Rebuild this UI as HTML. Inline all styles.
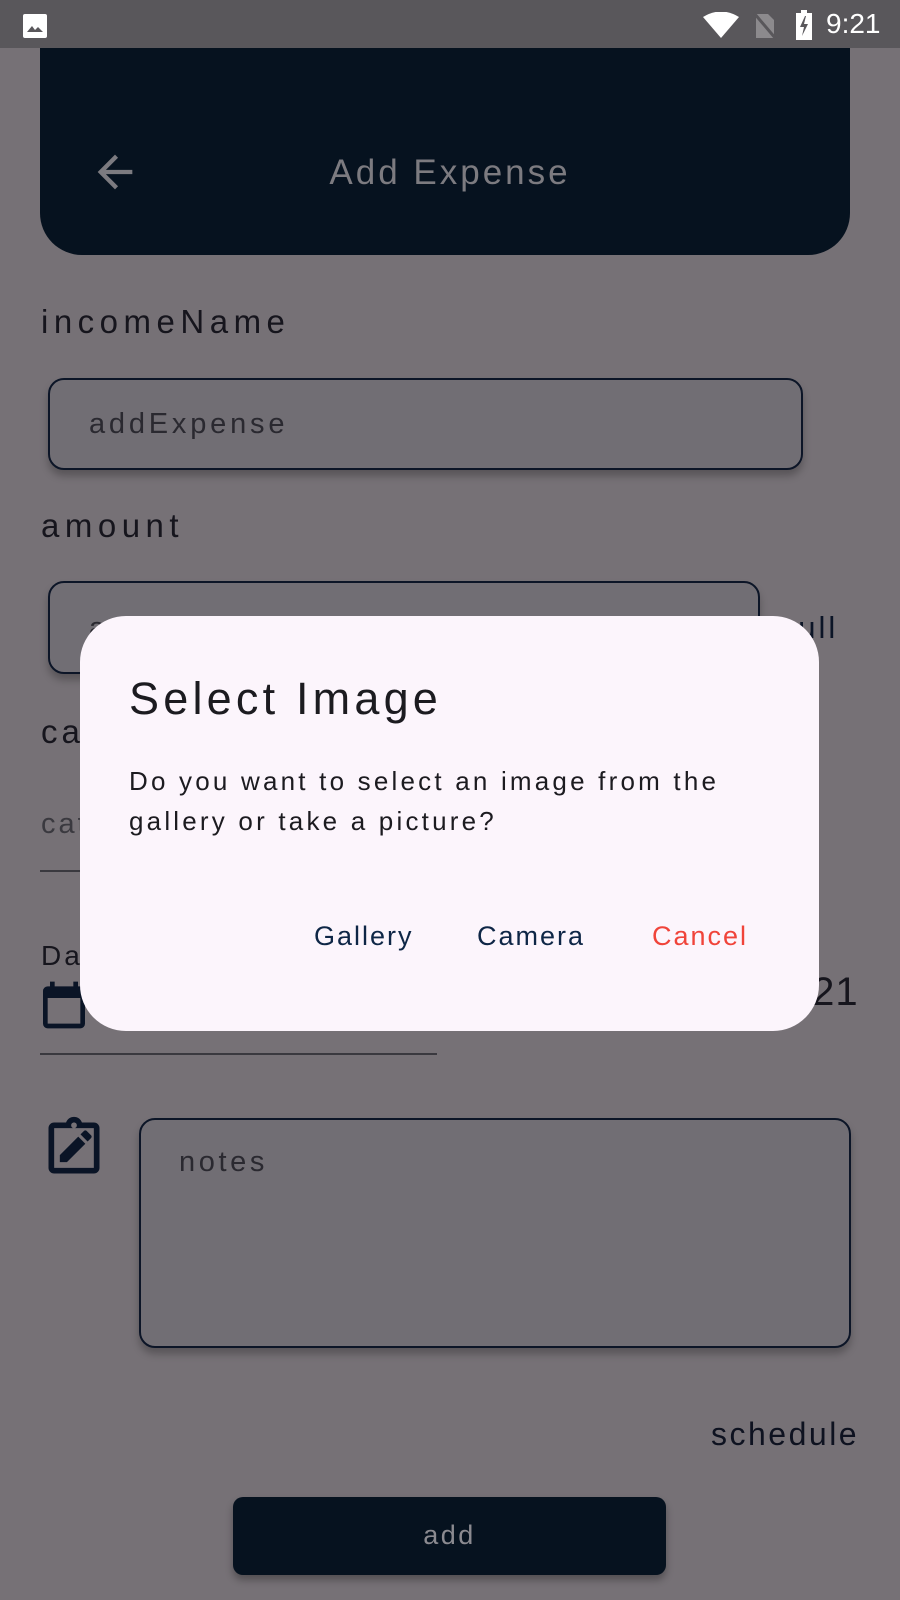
<!DOCTYPE html>
<html><head><meta charset="utf-8"><style>
*{margin:0;padding:0;box-sizing:border-box}
body{width:900px;height:1600px;background:#767176;position:relative;overflow:hidden;font-family:"Liberation Sans",sans-serif;color:#16151d}
.a{position:absolute;white-space:nowrap}
.box{position:absolute;border:2px solid #0c1527;border-radius:16px;background:#716e74;box-shadow:0 6px 8px rgba(0,0,0,.25)}
</style></head><body>
<div class="a" style="left:0;top:0;width:900px;height:48px;background:#59575b"></div>
<svg class="a" style="left:22px;top:13px" width="26" height="26" viewBox="0 0 26 26"><rect x="1" y="1" width="24" height="24" rx="2" fill="#fff"/><path d="M5 19l5-6 3 4 3-3 5 5z" fill="#59575b"/></svg>
<svg class="a" style="left:703px;top:12px" width="36" height="26" viewBox="0 0 36 26"><path d="M0 5Q18-6 36 5L18 26Z" fill="#fff"/></svg>
<svg class="a" style="left:752px;top:12px" width="26" height="28" viewBox="0 0 26 28"><path d="M4 2h12l6 6v18H4z" fill="#8c8a8d"/><path d="M2 1l22 26" stroke="#59575b" stroke-width="3"/></svg>
<svg class="a" style="left:795px;top:10px" width="18" height="30" viewBox="0 0 18 30"><rect x="6" y="0" width="6" height="3" fill="#fff"/><rect x="1" y="3" width="16" height="27" fill="#fff"/><path d="M10 6l-5 11h4l-2 9 6-12h-4l2-8z" fill="#59575b"/></svg>
<div class="a" style="left:826px;top:8px;font-size:28px;color:#fff">9:21</div>

<div class="a" style="left:40px;top:48px;width:810px;height:207px;background:#06121f;border-radius:0 0 42px 42px"></div>
<svg class="a" style="left:89px;top:146px" width="52" height="52" viewBox="0 0 24 24"><path d="M20 11H7.8l5.6-5.6L12 4l-8 8 8 8 1.4-1.4L7.8 13H20z" fill="#7c7b80"/></svg>
<div class="a" style="left:0;width:900px;text-align:center;top:153px;font-size:35px;letter-spacing:3px;color:#7c7b80">Add Expense</div>

<div class="a" style="left:41px;top:303px;font-size:33px;letter-spacing:5.5px">incomeName</div>
<div class="box" style="left:48px;top:378px;width:755px;height:92px"></div>
<div class="a" style="left:89px;top:408px;font-size:29px;letter-spacing:3.8px;color:#2a2930">addExpense</div>

<div class="a" style="left:41px;top:507px;font-size:33px;letter-spacing:5.5px">amount</div>
<div class="box" style="left:48px;top:581px;width:712px;height:93px"></div>
<div class="a" style="left:89px;top:612px;font-size:29px;color:#2a2930">a</div>
<div class="a" style="left:778px;top:610px;font-size:31px;letter-spacing:3px;color:#0c1527">null</div>

<div class="a" style="left:41px;top:713px;font-size:33px;letter-spacing:4px">ca</div>
<div class="a" style="left:41px;top:808px;font-size:29px;letter-spacing:3px;color:#3a393f">cat</div>
<div class="a" style="left:40px;top:870px;width:60px;height:2px;background:#3a393f"></div>
<div class="a" style="left:41px;top:940px;font-size:28px;letter-spacing:3px">Da</div>
<svg class="a" style="left:36px;top:977px" width="56" height="56" viewBox="0 0 24 24"><path d="M19 4h-1V2h-2v2H8V2H6v2H5a2 2 0 0 0-2 2v14a2 2 0 0 0 2 2h14a2 2 0 0 0 2-2V6a2 2 0 0 0-2-2zm0 16H5V9h14z" fill="#0a1426"/></svg>
<div class="a" style="left:800px;top:970px;font-size:40px;letter-spacing:1px;color:#16151d">.21</div>
<div class="a" style="left:40px;top:1053px;width:397px;height:2px;background:#3a393f"></div>

<svg class="a" style="left:40px;top:1114px" width="68" height="68" viewBox="0 0 24 24"><path d="M19 3h-4.2C14.4 1.8 13.3 1 12 1s-2.4.8-2.8 2H5a2 2 0 0 0-2 2v14a2 2 0 0 0 2 2h14a2 2 0 0 0 2-2V5a2 2 0 0 0-2-2zm-7 0c.6 0 1 .4 1 1s-.4 1-1 1-1-.4-1-1 .4-1 1-1zm7 16H5V5h14zM7 17v-2.5l6.5-6.5 2.5 2.5L9.5 17zm9.8-7.3l-2.5-2.5 1.2-1.2c.3-.3.7-.3 1 0l1.5 1.5c.3.3.3.7 0 1z" fill="#0a1426"/></svg>
<div class="box" style="left:139px;top:1118px;width:712px;height:230px"></div>
<div class="a" style="left:179px;top:1146px;font-size:29px;letter-spacing:3.6px;color:#2a2930">notes</div>

<div class="a" style="left:711px;top:1416px;font-size:32px;letter-spacing:2.5px;color:#0e1220">schedule</div>
<div class="a" style="left:233px;top:1497px;width:433px;height:78px;background:#06121f;border-radius:10px;box-shadow:0 5px 8px rgba(0,0,0,.3)"></div>
<div class="a" style="left:233px;width:433px;text-align:center;top:1520px;font-size:27px;letter-spacing:2.5px;color:#8b8a90">add</div>

<div class="a" style="left:80px;top:616px;width:739px;height:415px;background:#fcf5fc;border-radius:46px"></div>
<div class="a" style="left:129px;top:673px;font-size:45px;letter-spacing:4.2px;color:#1c1b20">Select Image</div>
<div class="a" style="left:129px;top:761px;font-size:26px;line-height:40px;color:#1c1b20;letter-spacing:3.2px">Do you want to select an image from the<br>gallery or take a picture?</div>
<div class="a" style="left:314px;top:921px;font-size:27px;letter-spacing:2px;color:#0e2646">Gallery</div>
<div class="a" style="left:477px;top:921px;font-size:27px;letter-spacing:2px;color:#0e2646">Camera</div>
<div class="a" style="left:652px;top:921px;font-size:27px;letter-spacing:2px;color:#f0443a">Cancel</div>
</body></html>
